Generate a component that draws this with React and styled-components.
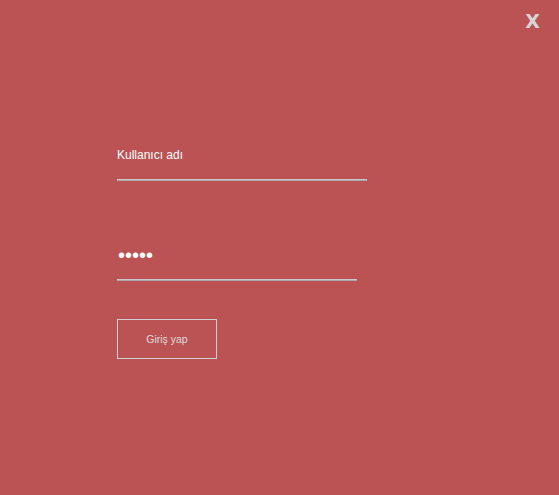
import React from "react";
import styled, { createGlobalStyle } from "styled-components";

const Global = createGlobalStyle`
  html, body { margin: 0; padding: 0; background: #bb5254; }
  body { font-family: "Liberation Sans", Arial, sans-serif; }
`;

const Page = styled.div`
  position: relative;
  width: 559px;
  height: 495px;
  background: #bb5254;
  overflow: hidden;
`;

const Close = styled.button`
  position: absolute;
  top: 10px;
  right: 19px;
  border: none;
  background: none;
  padding: 0;
  margin: 0;
  color: #d6d6d6;
  font-family: "DejaVu Sans", Verdana, sans-serif;
  font-weight: bold;
  font-size: 19px;
  line-height: 22px;
  cursor: pointer;
`;

const Form = styled.form`
  display: flex;
  flex-direction: column;
  align-items: flex-start;
  padding: 147px 0 0 117px;
`;

const Field = styled.div`
  width: ${(p) => p.$w}px;
  height: ${(p) => p.$h}px;
  box-sizing: border-box;
  border-bottom: 1px solid #a9a9a9;
  box-shadow: inset 0 -2px 0 -1px #c9c9c9;
  margin-bottom: ${(p) => p.$mb}px;
  display: flex;
  align-items: flex-start;
`;

const Label = styled.span`
  color: #ffffff;
  font-size: 12px;
  line-height: 14px;
  padding-top: 1px;
`;

const Dots = styled.span`
  color: #ffffff;
  font-family: "Liberation Sans", Arial, sans-serif;
  font-size: 20px;
  line-height: 16px;
  padding-left: 1px;
`;

const Button = styled.button`
  width: 100px;
  height: 40px;
  box-sizing: border-box;
  background: transparent;
  border: 1px solid #cfcfcf;
  color: #dcdcdc;
  font-family: "Liberation Sans", Arial, sans-serif;
  font-size: 10.5px;
  padding: 0 0 1px 0;
  cursor: pointer;
`;

export default function App() {
  return (
    <Page>
      <Global />
      <Close type="button">X</Close>
      <Form onSubmit={(e) => e.preventDefault()}>
        <Field $w={250} $h={34} $mb={66}>
          <Label>Kullanıcı adı</Label>
        </Field>
        <Field $w={240} $h={34} $mb={38}>
          <Dots>•••••</Dots>
        </Field>
        <Button type="submit">Giriş yap</Button>
      </Form>
    </Page>
  );
}
